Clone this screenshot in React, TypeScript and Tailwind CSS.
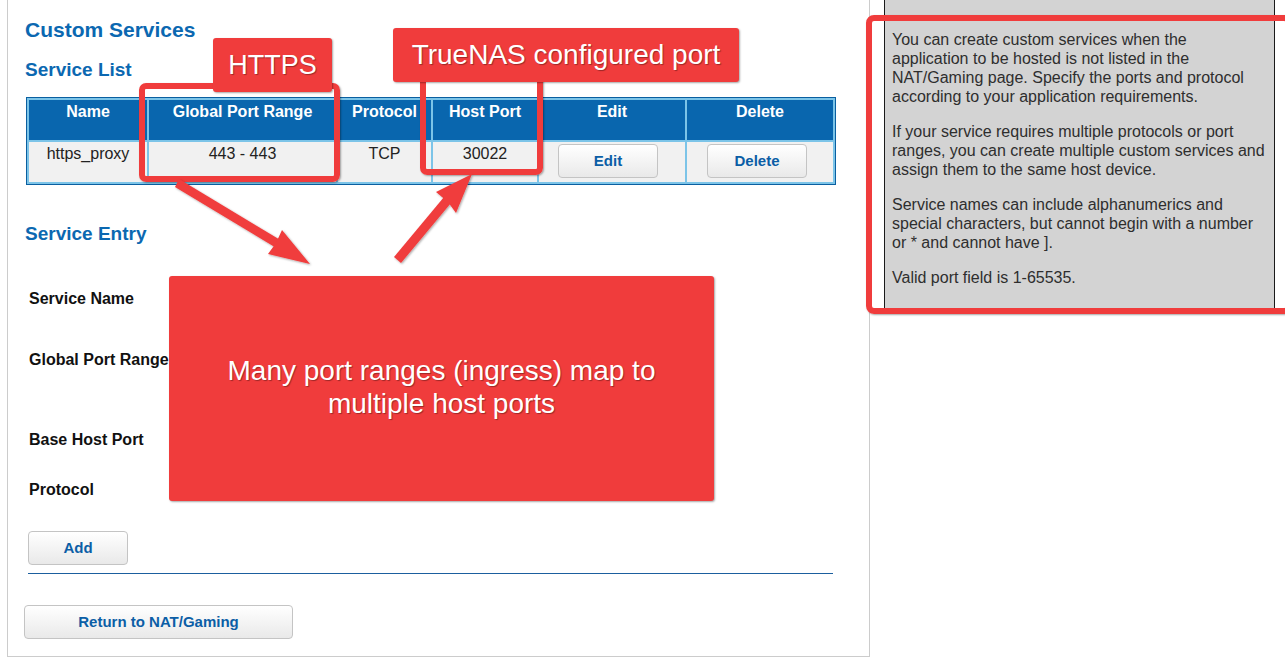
import React from "react";

const font = { fontFamily: '"Liberation Sans", Arial, sans-serif' };

function Btn({ children, className }: { children: React.ReactNode; className: string }) {
  return (
    <div
      className={`flex items-center justify-center h-[34px] rounded-[4px] border border-[#c4c4c4] bg-gradient-to-b from-[#ffffff] to-[#e9e9e9] text-[15px] font-bold text-[#0b5ea6] ${className}`}
    >
      {children}
    </div>
  );
}

export default function App() {
  const th = "bg-[#0966ae] text-white font-bold text-[16px] leading-[18px] align-top pt-[3px] text-center";
  const td = "bg-[#f1f1f1] text-[#222] text-[16px] leading-[18px] align-top pt-[3px] text-center";
  const paragraphs = [
    "You can create custom services when the application to be hosted is not listed in the NAT/Gaming page. Specify the ports and protocol according to your application requirements.",
    "If your service requires multiple protocols or port ranges, you can create multiple custom services and assign them to the same host device.",
    "Service names can include alphanumerics and special characters, but cannot begin with a number or * and cannot have ].",
    "Valid port field is 1-65535.",
  ];
  const labels = [
    { t: "Service Name", mt: "mt-[44px]" },
    { t: "Global Port Range", mt: "mt-[41px]" },
    { t: "Base Host Port", mt: "mt-[60px]" },
    { t: "Protocol", mt: "mt-[30px]" },
  ];
  const red = "bg-[#f03c3c]";
  const tshadow = "[text-shadow:1px_1px_1px_rgba(0,0,0,0.35)]";
  return (
    <div className="relative w-[1285px] h-[668px] overflow-hidden bg-white" style={font}>
      <div className="flex items-start">
        {/* main panel */}
        <div className="ml-[7px] w-[863px] border-l border-r border-b border-[#cccccc] pl-[18px] pb-[17px] flex flex-col">
          <h1 className="mt-[18px] ml-[-1px] text-[21px] leading-[24px] font-bold text-[#0b68b1]">Custom Services</h1>
          <h2 className="mt-[17px] ml-[-1px] text-[19px] leading-[22px] font-bold text-[#0b68b1]">Service List</h2>
          <table className="mt-[16px] w-[810px] border border-[#0a5fa0] bg-[#7cc4e8] border-separate border-spacing-[2px] table-fixed">
            <colgroup>
              <col className="w-[118px]" />
              <col className="w-[187px]" />
              <col className="w-[93px]" />
              <col className="w-[104px]" />
              <col className="w-[146px]" />
              <col className="w-[146px]" />
            </colgroup>
            <thead>
              <tr className="h-[40px]">
                <th className={th}>Name</th>
                <th className={th}>Global Port Range</th>
                <th className={th}>Protocol</th>
                <th className={th}>Host Port</th>
                <th className={th}>Edit</th>
                <th className={th}>Delete</th>
              </tr>
            </thead>
            <tbody>
              <tr className="h-[40px]">
                <td className={td}>https_proxy</td>
                <td className={td}>443 - 443</td>
                <td className={td}>TCP</td>
                <td className={td}>30022</td>
                <td className="bg-[#f1f1f1] align-top pt-[2px] pl-[19px]">
                  <Btn className="w-[100px]">Edit</Btn>
                </td>
                <td className="bg-[#f1f1f1] align-top pt-[2px] pl-[20px]">
                  <Btn className="w-[100px]">Delete</Btn>
                </td>
              </tr>
            </tbody>
          </table>
          <h2 className="mt-[38px] ml-[-1px] text-[19px] leading-[22px] font-bold text-[#0b68b1]">Service Entry</h2>
          {labels.map((l) => (
            <div key={l.t} className={`${l.mt} ml-[3px] text-[16px] leading-[20px] font-bold text-[#111]`}>
              {l.t}
            </div>
          ))}
          <Btn className="mt-[31px] ml-[2px] w-[100px]">Add</Btn>
          <div className="mt-[8px] ml-[2px] w-[805px] h-px bg-[#1b5f9e]" />
          <Btn className="mt-[31px] ml-[-2px] w-[269px]">Return to NAT/Gaming</Btn>
        </div>

        {/* sidebar */}
        <div className="ml-[14px] w-[391px] h-[310px] bg-[#d3d3d3] border-l border-r border-[#1a1a1a] pl-[7px] pr-[8px] pt-[30px] text-[16px] leading-[19px] text-[#2e2e2e]">
          {paragraphs.map((p, i) => (
            <p key={i} className="mb-[16px]">
              {p}
            </p>
          ))}
        </div>
      </div>

      {/* annotation outlines */}
      <div className="absolute left-[139px] top-[83px] w-[201px] h-[99px] border-[6px] border-[#f03c3c] rounded-[7px] shadow-[1px_1px_2px_rgba(0,0,0,0.35)]" />
      <div className="absolute left-[420px] top-[70px] w-[123px] h-[105px] border-[6px] border-[#f03c3c] rounded-[7px] shadow-[1px_1px_2px_rgba(0,0,0,0.35)]" />
      <div className="absolute left-[866px] top-[15px] w-[426px] h-[299px] border-[6px] border-[#f03c3c] rounded-[8px] shadow-[1px_1px_2px_rgba(0,0,0,0.35)]" />

      {/* labels */}
      <div className={`absolute left-[213px] top-[38px] w-[119px] h-[54px] ${red} rounded-[3px] shadow-[1px_1px_2px_rgba(0,0,0,0.35)] flex items-center justify-center text-white text-[27px] ${tshadow}`}>
        HTTPS
      </div>
      <div className={`absolute left-[393px] top-[28px] w-[346px] h-[54px] ${red} rounded-[3px] shadow-[1px_1px_2px_rgba(0,0,0,0.35)] flex items-center justify-center text-white text-[28px] ${tshadow}`}>
        TrueNAS configured port
      </div>
      <div className={`absolute left-[169px] top-[276px] w-[545px] h-[225px] ${red} rounded-[3px] shadow-[1px_1px_2px_rgba(0,0,0,0.35)] flex items-center justify-center text-center text-white text-[28px] leading-[33px] ${tshadow}`}>
        <div className="mt-[-4px]">
          Many port ranges (ingress) map to
          <br />
          multiple host ports
        </div>
      </div>

      {/* arrows */}
      <svg className="absolute left-0 top-0" width="1285" height="668" viewBox="0 0 1285 668">
        <defs>
          <filter id="sh" x="-20%" y="-20%" width="140%" height="140%">
            <feDropShadow dx="1" dy="1" stdDeviation="0.8" floodColor="#000" floodOpacity="0.35" />
          </filter>
        </defs>
        <g fill="#f03c3c" filter="url(#sh)">
          <polygon points="175,187 179,179 282,241 278,249" />
          <polygon points="310,264 268,254 276,243 282,230" />
          <polygon points="394,257 401,263 451,203 444,197" />
          <polygon points="472,174 436,192 448,202 456,213" />
        </g>
      </svg>
    </div>
  );
}
